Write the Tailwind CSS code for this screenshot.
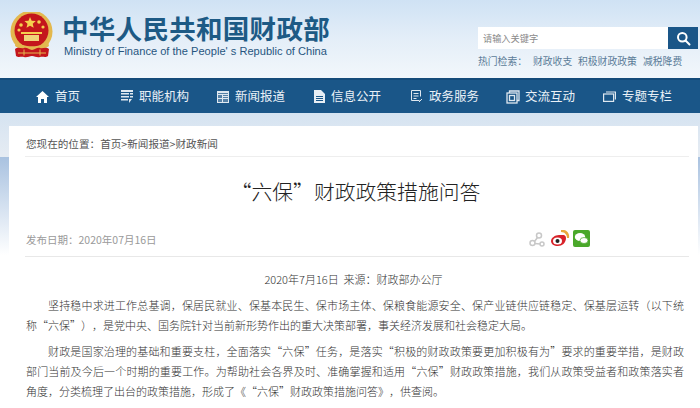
<!DOCTYPE html>
<html lang="zh-CN">
<head>
<meta charset="utf-8">
<script src="https://cdn.jsdelivr.net/npm/@tailwindcss/browser@4"></script>
</head>
<body class="w-[700px] h-[408px] overflow-hidden bg-white font-['Noto_Sans_CJK_SC','Noto_Sans',sans-serif]">
<div class="relative w-[700px] h-[408px] overflow-hidden bg-white">
  <!-- background sky -->
  <div class="absolute inset-x-0 top-0 h-[78px] bg-gradient-to-b from-[#cfe2f4] via-[#e4eef8] to-[#f2f7fb]"></div>
  <div class="absolute inset-x-0 top-[113px] h-[44px] bg-gradient-to-b from-[#d5e3f1] to-[#e6ecf3]"></div>
  <div class="absolute inset-x-0 top-[157px] h-[98px] bg-gradient-to-b from-[#a9c2e0] to-[#ffffff]"></div>

  <div class="relative flex flex-col">
    <!-- header -->
    <header class="h-[78px] flex justify-between">
      <div class="flex items-start pl-[10px] pt-[12px] gap-[10px]">
        <svg class="w-[44px] h-[46px]" viewBox="0 0 44 46">
          <circle cx="21.5" cy="19.500" r="21" fill="#e3b84e"/>
          <circle cx="21.5" cy="18.500" r="17" fill="#c4161c"/>
          <path d="M20 5l1.700 3.800 4.100.3-3.100 2.700 1 4-3.700-2.100-3.500 2.100 1-4-3.100-2.700 4.100-.3z" fill="#f5cf4e"/>
          <circle cx="11" cy="13" r="1.800" fill="#f5cf4e"/><circle cx="29" cy="10" r="1.800" fill="#f5cf4e"/><circle cx="33" cy="15" r="1.600" fill="#f5cf4e"/><circle cx="9" cy="18" r="1.600" fill="#f5cf4e"/>
          <rect x="11" y="20" width="21" height="2" fill="#f5cf4e"/>
          <rect x="14" y="23" width="15" height="6" fill="#f0d47a"/>
          <path d="M6 29c6 7 26 7 32 0l1 5c-7 5-27 5-34 0z" fill="#e3b84e"/>
          <path d="M5 37c3-3 6 0 9-1s5 2 8 2 5-3 8-2 6-2 9 1l-1 7c-3 2-5 0-8 1s-5-1-8-1-5 2-8 1-5 1-8-1z" fill="#c4161c"/>
          <path d="M8 41h28M14 37.500v6M30 37.500v6" stroke="#e3b84e" fill="none"/>
        </svg>
        <div class="-ml-[2px] pt-[2px] flex flex-col">
          <div class="text-[26.5px] leading-[27px] font-bold text-[#1d5a85] tracking-[0.3px] whitespace-nowrap">中华人民共和国财政部</div>
          <div class="mt-[3px] ml-[2px] text-[11.1px] leading-[14px] text-[#27567f] font-['Liberation_Sans',sans-serif] whitespace-nowrap">Ministry of Finance of the People' s Republic of China</div>
        </div>
      </div>
      <div class="pt-[27px] w-[222px] flex flex-col">
        <div class="flex h-[22px]">
          <div class="w-[190px] bg-white text-[9.200px] leading-[22px] pl-[5px] text-[#8a8a8a]">请输入关键字</div>
          <div class="w-[30px] bg-[#1a5688] flex items-center justify-center">
            <svg class="w-[15px] h-[15px]" viewBox="0 0 15 15" fill="none" stroke="#fff" stroke-width="2"><circle cx="6.300" cy="6.300" r="4.300"/><path d="M9.500 9.500l4 4" stroke-linecap="round"/></svg>
          </div>
        </div>
        <div class="mt-[4px] flex text-[9.800px] leading-[16px] text-[#5b7c98] whitespace-nowrap">
          <span class="w-[55px]">热门检索：</span><span class="w-[45px]">财政收支</span><span class="w-[65px]">积极财政政策</span><span>减税降费</span>
        </div>
      </div>
    </header>

    <!-- nav -->
    <nav class="h-[35px] bg-[#1a5688] border-t-2 border-[#164c7a] flex items-center pl-[36px] text-[12.5px] text-[#eaf1f7] whitespace-nowrap">
      <div class="flex items-center gap-[6px] w-[85px]">
        <svg class="w-[13px] h-[12px]" viewBox="0 0 13 12" fill="#fff"><path d="M6.500 0L13 6h-2v6H8V8H5v4H2V6H0z"/></svg><span>首页</span>
      </div>
      <div class="flex items-center gap-[6px] w-[96px]">
        <svg class="w-[12px] h-[13px]" viewBox="0 0 12 13" fill="#dfe8f0"><path d="M0 0h12v2H0zM0 3h8v1.500H0zM9 3h3v1.500H9zM0 6h8v1.500H0zM9 6h3v1.500H9zM0 9h7v1.500H0zM8 9l3 0-3 4z"/></svg><span>职能机构</span>
      </div>
      <div class="flex items-center gap-[6px] w-[97px]">
        <svg class="w-[12px] h-[12px]" viewBox="0 0 12 12" fill="#dfe8f0"><path d="M0 0h12v12H0z"/><path d="M1 2h10v1H1zM1 4h4v3H1zM6 4h5v1H6zM6 6h5v1H6zM1 8h4v3H1zM6 8h5v3H6z" fill="#1a5688" opacity=".7"/></svg><span>新闻报道</span>
      </div>
      <div class="flex items-center gap-[6px] w-[96px]">
        <svg class="w-[11px] h-[13px]" viewBox="0 0 11 13" fill="#e8eef4"><path d="M0 0h7l4 4v9H0z"/><path d="M2 6h7v1H2zM2 8h7v1H2zM2 10h7v1H2z" fill="#1a5688"/></svg><span>信息公开</span>
      </div>
      <div class="flex items-center gap-[6px] w-[96px]">
        <svg class="w-[13px] h-[13px]" viewBox="0 0 13 13" fill="none" stroke="#dfe8f0"><path d="M9.500 10.500H1.500v-10h9v6M3.500 3.500h5M3.500 6h5M3.500 8.500h3M9 12l3-3"/></svg><span>政务服务</span>
      </div>
      <div class="flex items-center gap-[5px] w-[97px]">
        <svg class="w-[14px] h-[14px]" viewBox="0 0 14 14" fill="none" stroke="#dfe8f0" stroke-width="1.300"><path d="M3.500 3V1h9.500v9.500h-2"/><rect x="1" y="3" width="10" height="10"/><rect x="3.500" y="5.500" width="5" height="5"/></svg><span>交流互动</span>
      </div>
      <div class="flex items-center gap-[6px]">
        <svg class="w-[13px] h-[11px]" viewBox="0 0 13 11" fill="none" stroke="#dfe8f0" stroke-width="1.200"><rect x=".6" y="3" width="10" height="7.400"/><path d="M3 1h9.400v7.500"/></svg><span>专题专栏</span>
      </div>
    </nav>

    <!-- card -->
    <main class="mt-[13px] ml-[9px] mr-[2px] bg-white pl-[16px] pr-[9px] h-[300px]">
      <div class="h-[31px] pl-[1px] border-b border-[#eeeeee] text-[10.6px] leading-[35px] text-[#555555]">您现在的位置：首页&gt;新闻报道&gt;财政新闻</div>
      <h1 class="mt-[20px] pr-[3px] text-center text-[20.800px] leading-[28px] font-light text-[#222222]">“六保”财政政策措施问答</h1>
      <div class="mt-[21px] h-[31px] pl-[1px] border-b border-[#e8e8e8] flex justify-between items-start">
        <span class="text-[10.5px] leading-[24px] pt-[2px] text-[#9a9a9a]">发布日期：2020年07月16日</span>
        <div class="flex items-center gap-[6px] mr-[99px] mt-[3px]">
          <svg class="w-[16px] h-[16px] mt-[3px]" viewBox="0 0 16 16" fill="none" stroke="#c8c8c8" stroke-width="1.500"><circle cx="3.500" cy="11" r="2.500"/><circle cx="10" cy="3.500" r="2.500"/><circle cx="13" cy="12" r="2"/><path d="M5.500 9.500L8.500 5.500M5.800 11.500L11 12"/></svg>
          <svg class="w-[19px] h-[18px] mr-[-3px]" viewBox="0 0 19 18"><path d="M8 5c3 0 7-1 7 3 0 5-4 8-8 8s-7-2-7-5c0-3 4-6 8-6z" fill="#d8232a"/><ellipse cx="6.500" cy="11" rx="4.500" ry="3.600" fill="#fff"/><circle cx="6.500" cy="11" r="2" fill="#222"/><path d="M10 0c5-1 9 3 8 8h-2c0-3-2-6-6-6z" fill="#e9a93c"/></svg>
          <svg class="w-[17px] h-[17px]" viewBox="0 0 17 17"><rect width="17" height="17" rx="2" fill="#4aa82a"/><ellipse cx="7" cy="7" rx="5.200" ry="4" fill="#fff"/><ellipse cx="11" cy="10.500" rx="4" ry="3" fill="#fff" stroke="#4aa82a" stroke-width=".7"/></svg>
        </div>
      </div>
      <article class="pl-[1px] pr-[5px] font-['Noto_Sans_CJK_SC',serif] text-[#333333] text-[11px] leading-[20px] font-light [text-spacing-trim:space-all]">
        <p class="mt-[12px] pr-[3px] text-center">2020年7月16日&nbsp; 来源：财政部办公厅</p>
        <p class="mt-[6px] indent-[22px] text-justify">坚持稳中求进工作总基调，保居民就业、保基本民生、保市场主体、保粮食能源安全、保产业链供应链稳定、保基层运转（以下统称“六保”），是党中央、国务院针对当前新形势作出的重大决策部署，事关经济发展和社会稳定大局。</p>
        <p class="mt-[6px] indent-[22px] text-justify">财政是国家治理的基础和重要支柱，全面落实“六保”任务，是落实“积极的财政政策要更加积极有为”要求的重要举措，是财政部门当前及今后一个时期的重要工作。为帮助社会各界及时、准确掌握和适用“六保”财政政策措施，我们从政策受益者和政策落实者角度，分类梳理了出台的政策措施，形成了《“六保”财政政策措施问答》，供查阅。</p>
      </article>
    </main>
  </div>
</div>
</body>
</html>
